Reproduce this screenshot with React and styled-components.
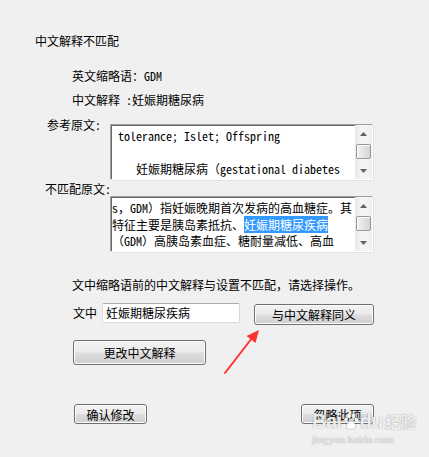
import React from 'react';
import styled, { createGlobalStyle } from 'styled-components';

const GlobalStyle = createGlobalStyle`
  html, body {
    margin: 0;
    padding: 0;
    background: #f0f0f0;
  }
  body {
    font-family: "Noto Sans Mono CJK SC", "Noto Sans CJK SC", "Liberation Mono", monospace;
    font-size: 12px;
    color: #000000;
  }
`;

const Dialog = styled.div`
  position: relative;
  width: 429px;
  height: 457px;
  overflow: hidden;
  background: #f0f0f0;
  display: flex;
  flex-direction: column;
`;

const Title = styled.div`
  margin: 34px 0 0 35px;
  line-height: 14px;
  height: 14px;
  white-space: nowrap;
`;

const InfoLine = styled.div`
  margin: ${p => p.$top}px 0 0 72px;
  line-height: 14px;
  height: 14px;
  white-space: pre;
`;

const RefRow = styled.div`
  display: flex;
  align-items: flex-start;
  margin: 11px 0 0 47px;
`;

const Label = styled.div`
  line-height: 14px;
  height: 14px;
  white-space: nowrap;
  width: ${p => p.$width || 'auto'};
`;

const MismatchLabel = styled(Label)`
  margin: 2px 0 0 45px;
`;

const TextBox = styled.div`
  box-sizing: border-box;
  width: 263px;
  height: 56px;
  margin: ${p => p.$margin};
  display: flex;
  background: #ffffff;
  border: 1px solid;
  border-color: #a0a0a0 #ffffff #ffffff #a0a0a0;
  box-shadow: inset 1px 1px 0 #696969, 1px 1px 0 #e3e3e3;
`;

const TextArea = styled.div`
  flex: 1;
  overflow: hidden;
  padding: ${p => p.$pad};
  line-height: 16.5px;
  white-space: pre;
`;

const Highlight = styled.span`
  background: #3399ff;
  color: #ffffff;
`;

const ScrollBar = styled.div`
  width: 17px;
  display: flex;
  flex-direction: column;
  background: linear-gradient(90deg, #e8e8e8, #f5f5f5 40%, #f0f0f0);
`;

const ArrowButton = styled.div`
  height: 17px;
  display: flex;
  align-items: center;
  justify-content: center;
`;

const Thumb = styled.div`
  box-sizing: border-box;
  height: 15px;
  width: 15px;
  margin: 2px 0 0 1px;
  border: 1px solid #979797;
  border-radius: 2px;
  background: linear-gradient(90deg, #f3f3f3, #e4e4e4 50%, #d4d4d4);
  box-shadow: inset 1px 1px 0 #ffffff;
`;

const Spacer = styled.div`
  flex: 1;
`;

const Prompt = styled.div`
  margin: 26px 0 0 72px;
  line-height: 14px;
  height: 14px;
  white-space: nowrap;
`;

const ChoiceRow = styled.div`
  display: flex;
  align-items: flex-start;
  margin: 11px 0 0 73px;
`;

const InlineLabel = styled.div`
  line-height: 20px;
  width: 29px;
`;

const Input = styled.div`
  box-sizing: border-box;
  width: 138px;
  height: 20px;
  padding: 0 3px;
  line-height: 18px;
  background: #ffffff;
  border: 1px solid #d9dade;
  border-top-color: #abadb3;
  border-radius: 2px;
  white-space: nowrap;
`;

const Button = styled.div`
  box-sizing: border-box;
  width: ${p => p.$w}px;
  height: ${p => p.$h}px;
  margin: ${p => p.$margin || '0'};
  display: flex;
  align-items: center;
  justify-content: center;
  border: 1px solid #707070;
  border-radius: 3px;
  background: linear-gradient(180deg, #f2f2f2 0%, #ebebeb 48%, #dddddd 52%, #cfcfcf 100%);
  box-shadow: inset 0 0 0 1px #fcfcfc;
  white-space: nowrap;
`;

const BottomRow = styled.div`
  display: flex;
  justify-content: space-between;
  width: 300px;
  margin: 39px 0 0 74px;
`;

const Overlay = styled.svg`
  position: absolute;
  left: 0;
  top: 0;
  pointer-events: none;
`;

const Watermark = styled.div`
  position: absolute;
  left: 312px;
  top: 410px;
  display: flex;
  flex-direction: column;
  color: rgba(255, 255, 255, 0.9);
  text-shadow: 0 0 1px rgba(0, 0, 0, 0.35), 0 0 1px rgba(0, 0, 0, 0.2);
  pointer-events: none;
`;

const MarkTop = styled.div`
  display: flex;
  align-items: center;
  font-family: "Liberation Sans", Arial, sans-serif;
  font-weight: 700;
  font-size: 20px;
  line-height: 22px;
  letter-spacing: -0.5px;
`;

const MarkCn = styled.span`
  font-family: "Noto Sans CJK SC", sans-serif;
  font-weight: 700;
  font-size: 16px;
  margin-left: 2px;
`;

const MarkUrl = styled.div`
  font-family: "Liberation Serif", serif;
  font-size: 11px;
  line-height: 12px;
  margin-top: 1px;
`;

const UpArrow = () => (
  <svg width="7" height="4" viewBox="0 0 7 4"><path d="M3.5 0 L7 4 L0 4 Z" fill="#606060" /></svg>
);
const DownArrow = () => (
  <svg width="7" height="4" viewBox="0 0 7 4"><path d="M0 0 L7 0 L3.5 4 Z" fill="#606060" /></svg>
);

const Scroll = () => (
  <ScrollBar>
    <ArrowButton><UpArrow /></ArrowButton>
    <Thumb />
    <Spacer />
    <ArrowButton><DownArrow /></ArrowButton>
  </ScrollBar>
);

const Paw = () => (
  <svg width="16" height="17" viewBox="0 0 16 17" style={{ margin: '0 1px' }}>
    <g fill="rgba(255,255,255,0.9)" stroke="rgba(0,0,0,0.25)" strokeWidth="0.6">
      <ellipse cx="3" cy="7" rx="2" ry="2.4" />
      <ellipse cx="6" cy="3" rx="2" ry="2.4" />
      <ellipse cx="10.5" cy="3" rx="2" ry="2.4" />
      <ellipse cx="13.5" cy="7" rx="2" ry="2.4" />
      <path d="M8 8 C11 8 14 13 12 15.5 C10.5 16.5 5.5 16.5 4 15.5 C2 13 5 8 8 8 Z" />
    </g>
  </svg>
);

export default function App() {
  return (
    <>
      <GlobalStyle />
      <Dialog>
        <Title>中文解释不匹配</Title>
        <InfoLine $top={21}>英文缩略语：GDM</InfoLine>
        <InfoLine $top={10}>中文解释 :妊娠期糖尿病</InfoLine>

        <RefRow>
          <Label $width="63px">参考原文:</Label>
          <TextBox $margin="6px 0 0 0">
            <TextArea $pad="3px 0 0 7px">
              {'tolerance; Islet; Offspring\n\n   妊娠期糖尿病（gestational diabetes\n            指妊娠期首次发现的糖代谢'}
            </TextArea>
            <Scroll />
          </TextBox>
        </RefRow>

        <MismatchLabel>不匹配原文:</MismatchLabel>
        <TextBox $margin="0 0 0 110px">
          <TextArea $pad="3px 0 0 1px">
            {'s，GDM）指妊娠晚期首次发病的高血糖症。其\n特征主要是胰岛素抵抗、'}
            <Highlight>妊娠期糖尿疾病</Highlight>
            {'\n（GDM）高胰岛素血症、糖耐量减低、高血\n糖、胎儿宫内发育异常及远期代谢异常等病'}
          </TextArea>
          <Scroll />
        </TextBox>

        <Prompt>文中缩略语前的中文解释与设置不匹配，请选择操作。</Prompt>

        <ChoiceRow>
          <InlineLabel>文中</InlineLabel>
          <Input>妊娠期糖尿疾病</Input>
          <Button $w={120} $h={21} $margin="1px 0 0 14px">与中文解释同义</Button>
        </ChoiceRow>

        <Button $w={133} $h={25} $margin="15px 0 0 73px">更改中文解释</Button>

        <BottomRow>
          <Button $w={73} $h={20}>确认修改</Button>
          <Button $w={73} $h={20}>忽略此项</Button>
        </BottomRow>

        <Overlay width="429" height="457" viewBox="0 0 429 457">
          <line x1="225" y1="373" x2="252" y2="338" stroke="#ff3333" strokeWidth="2" strokeLinecap="round" />
          <path d="M259 330 L255.5 343 L246.5 336 Z" fill="#ff3333" />
        </Overlay>

        <Watermark>
          <MarkTop>
            <span>Bai</span>
            <Paw />
            <span>du</span>
            <MarkCn>经验</MarkCn>
          </MarkTop>
          <MarkUrl>jingyan.baidu.com</MarkUrl>
        </Watermark>
      </Dialog>
    </>
  );
}
